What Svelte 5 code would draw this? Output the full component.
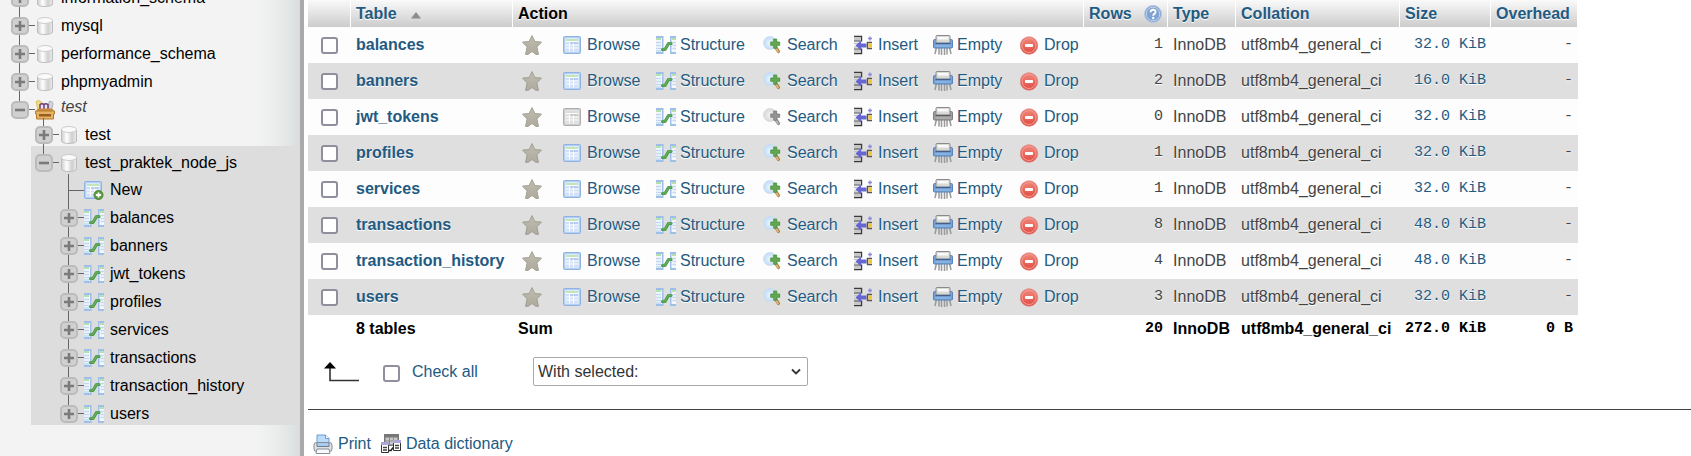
<script>
  const databases = ['information_schema', 'mysql', 'performance_schema', 'phpmyadmin'];
  let rows = $state([
    { name: 'balances', count: 1, size: '32.0 KiB', checked: false },
    { name: 'banners', count: 2, size: '16.0 KiB', checked: false },
    { name: 'jwt_tokens', count: 0, size: '32.0 KiB', checked: false },
    { name: 'profiles', count: 1, size: '32.0 KiB', checked: false },
    { name: 'services', count: 1, size: '32.0 KiB', checked: false },
    { name: 'transactions', count: 8, size: '48.0 KiB', checked: false },
    { name: 'transaction_history', count: 4, size: '48.0 KiB', checked: false },
    { name: 'users', count: 3, size: '32.0 KiB', checked: false }
  ]);
  const actions = ['Browse', 'Structure', 'Search', 'Insert', 'Empty', 'Drop'];
  const needsRows = ['Browse', 'Search', 'Empty'];
  let allChecked = $derived(rows.every((r) => r.checked));

  function toggleAll(event) {
    for (const r of rows) r.checked = event.currentTarget.checked;
  }
</script>

{#snippet icon(name, grey = false)}
  <svg class="icon" class:grey width="20" height="20" viewBox="0 0 20 20" aria-hidden="true">
    {#if name === 'Browse' || name === 'New'}
      <rect x="0.5" y="1.5" width="17" height="17" rx="1" fill="#b4d0f4" stroke="#8fb2e2" />
      <rect x="2.500" y="3.500" width="13" height="13" fill="#fff" />
      <path d="M3 5h12" stroke="#9ad48b" stroke-width="1.200" />
      <rect x="3" y="7" width="12" height="9" fill="#cfe0f6" />
      <path d="M3 10h12M3 13h12M6.500 7v9M10.500 7v9" stroke="#fff" />
      <path d="M7 8h8" stroke="#9dbbe6" />
      {#if name === 'New'}
        <circle cx="14.5" cy="15" r="4.5" fill="#5f9c40" stroke="#4a8430" />
        <path d="M14.5 12.4v5.2M11.9 15h5.2" stroke="#fff" stroke-width="1.8" />
      {/if}
    {:else if name === 'Structure'}
      <path d="M0 1h7.500v18H0z" fill="#9dbfe9" />
      <path d="M0 3h6v14H0z" fill="#f4f8fe" />
      <path d="M0 4h5" stroke="#9ad48b" stroke-width="1.400" />
      <path d="M0 7.5h5M0 10.5h5M0 13.5h5M0 16h5" stroke="#c4d7f0" stroke-width="1.6" />
      <path d="M14 1h6v18h-6z" fill="#9dbfe9" />
      <path d="M15.500 3H20v14h-4.500z" fill="#f4f8fe" />
      <path d="M16 4h4" stroke="#9ad48b" stroke-width="1.400" />
      <path d="M16.5 7.5H20M16.5 10.5H20M16.5 13.5H20" stroke="#c4d7f0" stroke-width="1.6" />
      <path d="M6.500 14.500h2.500l3.500-6h2.500" fill="none" stroke="#4a984a" stroke-width="3.2" stroke-linecap="round" stroke-linejoin="round" />
      <path d="M6.500 14.300h2.500l3.500-6h2.500" fill="none" stroke="#62ac5c" stroke-width="1.600" stroke-linecap="round" stroke-linejoin="round" />
    {:else if name === 'Search'}
      <path d="M12.500 12l3 4.500" stroke="#b88448" stroke-width="3.200" stroke-linecap="round" />
      <path d="M12.500 12l2.500 4.500" stroke="#eac18a" stroke-width="1.400" stroke-linecap="round" />
      <circle cx="7" cy="8" r="6.5" fill="url(#lens)" stroke="#c5daf0" stroke-width=".8" />
      <path d="M10.700 4h3v3h3v3.300h-3v3h-3v-3h-3V7h3z" fill="#62a851" stroke="#468f3b" stroke-width=".8" />
    {:else if name === 'Insert'}
      <path d="M0 1.500h7.500v5M0 18.500h7.500v-5" fill="none" stroke="#3a3a3a" stroke-width="1.400" />
      <path d="M0 2h6.500v3.500H0zM0 14.500h6.500v3.500H0z" fill="#c8c8c8" />
      <path d="M0 6h6.500M0 14h6.500" stroke="#444" stroke-width="1.200" />
      <path d="M0 8.500h4M0 12h3" stroke="#c4c4c4" stroke-width="1.600" />
      <path d="M1.500 10.500L7 5.500v3h5.500v4H7v3z" fill="#6666d2" />
      <path d="M18 7.500h-4.500v6H18" fill="none" stroke="#555" stroke-width="1.400" />
      <rect x="14.500" y="8.500" width="3.500" height="4" fill="#f8c62c" />
      <path d="M16 1.500v4M14 3.500h4" stroke="#8a8ae0" stroke-width="1.400" />
    {:else if name === 'Empty'}
      <path d="M3.500 12l-1.500 7M6 12v7.500M8.500 12v8M11.500 12v8M14 12v7.500M16.500 12l1.500 7" stroke="#999" stroke-width="1.500" fill="none" />
      <rect x="0.500" y="4.500" width="19" height="8.500" rx="1" fill="#74a3d8" stroke="#5684bd" />
      <rect x="3" y="0.500" width="14" height="7.500" rx="1" fill="#d9d9d9" stroke="#8a8a8a" />
      <rect x="4.500" y="2" width="11" height="2.500" fill="#fafafa" />
      <path d="M2.500 8.500h15" stroke="#40618d" stroke-width="1.200" />
      <path d="M2.500 11h15" stroke="#9dc0e8" />
    {:else if name === 'Drop'}
      <circle cx="9" cy="10.500" r="8.700" fill="url(#red)" stroke="#e08078" stroke-width=".8" />
      <circle cx="9" cy="10.500" r="7" fill="none" stroke="#f39b92" stroke-width="1" />
      <rect x="5" y="9" width="8" height="3" rx=".8" fill="#fff" />
    {:else if name === 'Star'}
      <path d="M10 .6l2.900 6 6.600.5-4.600 4.800 1.600 7.400-2.400.2L10 16.500 5.900 19.500l-2.400-.2 1.600-7.400L.5 7.100l6.600-.5z" fill="url(#star)" stroke="#a3a093" stroke-linejoin="round" />
    {:else if name === 'Database'}
      <path d="M2.500 4.500v11.500c0 3.300 15 3.300 15 0V4.500z" fill="url(#metal)" stroke="#bdbdbd" />
      <ellipse cx="10" cy="4.500" rx="7.500" ry="3" fill="#fafafa" stroke="#cdcdcd" />
    {:else if name === 'Group'}
      <path d="M1 1.500l3-1 3 2-.5 7.500H3z" fill="#f3dd80" stroke="#d3b650" stroke-width=".8" />
      <path d="M14 1.500q4-1 4 3l-2 7h-3z" fill="#d2d4d8" stroke="#aaa" stroke-width=".8" />
      <path d="M5 10V4.500q2-1.500 3.800 0 2-1.500 4.200 0V10" fill="#ece4f0" stroke="#6b3a7e" stroke-width="1.500" />
      <path d="M9 5v5" stroke="#6b3a7e" stroke-width="1.500" />
      <path d="M3 8.500h14l2.500 3H.5z" fill="#c98c3d" />
      <path d="M0.500 11h19v3h-1v5h-17v-5h-1z" fill="#e6b266" stroke="#b57a2e" />
      <rect x="4" y="14" width="12" height="2.500" fill="#965f20" />
    {:else if name === 'Help'}
      <circle cx="10" cy="10" r="8.500" fill="#7fa3d2" stroke="#b7c9e2" />
      <circle cx="10" cy="10" r="6.800" fill="none" stroke="#c5d6ec" />
      <path d="M7.600 8.300c0-3.300 5-3.200 5-.4 0 1.800-2.400 1.900-2.400 3.800" fill="none" stroke="#fff" stroke-width="1.900" />
      <circle cx="10.200" cy="14" r="1.200" fill="#fff" />
    {:else if name === 'Print'}
      <path d="M4 10V1h8.500L16 4.500V10z" fill="#bcdcfb" stroke="#6d9cd0" />
      <path d="M12.500 1v3.500H16" fill="#fff" stroke="#6d9cd0" />
      <rect x="1" y="8.500" width="18" height="9" rx="2.500" fill="#dfe2e6" stroke="#868d97" />
      <path d="M4 9v3.500h12V9" fill="#a9cdf2" stroke="#757b84" />
      <path d="M4 15h12l1 4.500H3z" fill="#f8fafc" stroke="#89909a" />
    {:else if name === 'Dictionary'}
      <path d="M3 0h15v12H3z" fill="#777" />
      <path d="M4.500 3.500h12v7h-12z" fill="#c9c9c9" />
      <path d="M4.500 7h12M8.500 3.500v7M12.500 3.500v7" stroke="#8a8a8a" />
      <path d="M0.500 9.500h7v9h-7zM12.500 7.500h7v9h-7z" fill="#fff" stroke="#333" />
      <path d="M0 8h8v3H0zM12 6h8v3h-8z" fill="#aaa6d9" />
      <path d="M2 13.500h4M2 16h4M14 11.500h4M14 14h4" stroke="#444" stroke-width="1.300" />
      <path d="M8 16.500h2l2-3" fill="none" stroke="#222" stroke-width="1.500" />
    {/if}
  </svg>
{/snippet}

{#snippet toggle(open, label)}
  <button class="toggle" type="button" aria-label={(open ? 'Collapse ' : 'Expand ') + label}>
    <svg width="10" height="10" viewBox="0 0 10 10" aria-hidden="true">
      <path d={open ? 'M0 5h10' : 'M0 5h10M5 0v10'} stroke="#7a7a7a" stroke-width="2.600" />
    </svg>
  </button>
{/snippet}

<svg class="defs" width="0" height="0" aria-hidden="true">
  <defs>
    <linearGradient id="metal"><stop offset="0" stop-color="#cdcdcd" /><stop offset=".35" stop-color="#fff" /><stop offset=".7" stop-color="#cfcfcf" /><stop offset="1" stop-color="#ececec" /></linearGradient>
    <linearGradient id="star" x2="0" y2="1"><stop offset="0" stop-color="#bfbcb0" /><stop offset="1" stop-color="#aeab9d" /></linearGradient>
    <linearGradient id="red" x2="0" y2="1"><stop offset="0" stop-color="#f08a7e" /><stop offset="1" stop-color="#e04a40" /></linearGradient>
    <radialGradient id="lens"><stop offset="0" stop-color="#eaf4ff" /><stop offset="1" stop-color="#c3dcf5" /></radialGradient>
  </defs>
</svg>

<div class="page">
  <nav class="sidebar">
    <ul class="tree">
      {#each databases as db}
        <li class="node">
          <span class="branch">{@render toggle(false, db)}</span>
          {@render icon('Database')}
          <a href="#{db}">{db}</a>
        </li>
      {/each}
      <li>
        <div class="node group last">
          <span class="branch">{@render toggle(true, 'group test')}</span>
          {@render icon('Group')}
          <a href="#group">test</a>
        </div>
        <ul class="level1">
          <li class="node">
            <span class="branch">{@render toggle(false, 'test')}</span>
            {@render icon('Database')}
            <a href="#test">test</a>
          </li>
          <li class="selected">
            <div class="node last">
              <span class="branch">{@render toggle(true, 'test_praktek_node_js')}</span>
              {@render icon('Database')}
              <a href="#test_praktek_node_js">test_praktek_node_js</a>
            </div>
            <ul class="level2">
              <li class="node new">
                <span class="branch"></span>
                {@render icon('New')}
                <a href="#new">New</a>
              </li>
              {#each rows as row, i}
                <li class="node" class:last={i === rows.length - 1}>
                  <span class="branch">{@render toggle(false, row.name)}</span>
                  {@render icon('Structure')}
                  <a href="#{row.name}">{row.name}</a>
                </li>
              {/each}
            </ul>
          </li>
        </ul>
      </li>
    </ul>
  </nav>

  <main>
    <table>
      <colgroup>
        <col class="c-check" /><col class="c-name" /><col class="c-star" />
        <col class="c-browse" /><col class="c-structure" /><col class="c-search" />
        <col class="c-insert" /><col class="c-empty" /><col class="c-drop" />
        <col class="c-rows" /><col class="c-type" /><col class="c-collation" />
        <col class="c-size" /><col class="c-overhead" />
      </colgroup>
      <thead>
        <tr>
          <th></th>
          <th>
            <a class="sort" href="#table">Table
              <svg width="10" height="8" viewBox="0 0 10 8" aria-hidden="true"><path d="M5 0l5 6.500H0z" fill="#8c8c8c" /></svg>
            </a>
          </th>
          <th class="black" colspan="7">Action</th>
          <th><a class="help" href="#rows">Rows {@render icon('Help')}</a></th>
          <th><a href="#type">Type</a></th>
          <th><a href="#collation">Collation</a></th>
          <th><a href="#size">Size</a></th>
          <th><a href="#overhead">Overhead</a></th>
        </tr>
      </thead>
      <tbody>
        {#each rows as row}
          <tr>
            <td class="check"><input type="checkbox" aria-label={row.name} bind:checked={row.checked} /></td>
            <th scope="row"><a href="#{row.name}">{row.name}</a></th>
            <td class="star"><a class="action" href="#favorite" aria-label="Favorite">{@render icon('Star')}</a></td>
            {#each actions as action}
              <td><a class="action" href="#{action}">{@render icon(action, row.count === 0 && needsRows.includes(action))}{action}</a></td>
            {/each}
            <td class="num">{row.count}</td>
            <td>InnoDB</td>
            <td>utf8mb4_general_ci</td>
            <td class="num"><a href="#size">{row.size}</a></td>
            <td class="num">-</td>
          </tr>
        {/each}
      </tbody>
      <tfoot>
        <tr>
          <th></th>
          <th>8 tables</th>
          <th colspan="7">Sum</th>
          <th class="num">20</th>
          <th>InnoDB</th>
          <th>utf8mb4_general_ci</th>
          <th class="num">272.0 KiB</th>
          <th class="num">0 B</th>
        </tr>
      </tfoot>
    </table>

    <div class="bulk">
      <svg class="arrow" width="36" height="20" viewBox="0 0 36 20" aria-hidden="true">
        <path d="M6 5v13.500h29" fill="none" stroke="#333" stroke-width="1.600" />
        <path d="M6 0l6 6.500H0z" fill="#000" />
      </svg>
      <label class="all"><input type="checkbox" checked={allChecked} onchange={toggleAll} />Check all</label>
      <div class="select">
        <select aria-label="With selected">
          <option>With selected:</option>
        </select>
        <svg width="10" height="8" viewBox="0 0 10 8" aria-hidden="true"><path d="M1 1.500l4 4 4-4" fill="none" stroke="#333" stroke-width="1.800" /></svg>
      </div>
    </div>

    <hr />

    <div class="tools">
      <a href="#print">{@render icon('Print')}Print</a>
      <a href="#dictionary">{@render icon('Dictionary')}Data dictionary</a>
    </div>
  </main>
</div>

<style>
  :global(body) {
    overflow: hidden;
    background: #fff;
  }
  .defs {
    position: absolute;
  }
  .page {
    display: flex;
    height: 100vh;
    overflow: hidden;
    font: 16px/20px 'Liberation Sans', Arial, sans-serif;
    color: #444;
  }
  a {
    color: #235a81;
    text-decoration: none;
  }
  .icon {
    display: block;
    flex: none;
  }
  .grey {
    filter: grayscale(1);
  }

  .sidebar {
    box-sizing: border-box;
    flex: 0 0 304px;
    overflow: hidden;
    border-right: 4px solid #aaa;
    background: linear-gradient(to right, #f3f3f3 256px, #e9ebeb 280px, #d9dddd);
  }
  ul {
    margin: 0;
    padding: 0;
    list-style: none;
  }
  /* The panel is scrolled part of the way through its first entry. */
  .tree {
    margin-top: -19px;
  }
  .node {
    display: flex;
    height: 28px;
    padding-left: 11px;
  }
  .node > :global(.icon) {
    margin-top: 7px;
  }
  .node a {
    margin: 7px 0 0 6px;
    color: #000;
  }
  .level1 .node {
    padding-left: 35px;
  }
  .level2 .node {
    padding-left: 60px;
  }
  .branch {
    box-sizing: border-box;
    width: 24px;
    padding-top: 8px;
    background:
      linear-gradient(#666, #666) 8px 0 / 1px 100% no-repeat,
      linear-gradient(#666, #666) 8px 16px / 16px 1px no-repeat;
  }
  .last .branch {
    background-size: 1px 16px, 16px 1px;
  }
  .node.group {
    height: 25px;
  }
  .group a {
    margin-top: 4px;
    color: #444;
    font-style: italic;
  }
  .node.new {
    height: 27px;
  }
  .new :global(.icon),
  .new a {
    margin-top: 6px;
  }
  .selected {
    background: linear-gradient(#ddd, #ddd) 31px 0 no-repeat;
  }
  .toggle {
    display: grid;
    place-items: center;
    box-sizing: border-box;
    width: 18px;
    height: 18px;
    padding: 0;
    border: 2px solid #bbb;
    border-radius: 5px;
    background: #d0d0d0;
  }

  main {
    flex: 1;
    min-width: 0;
    padding-left: 4px;
  }
  table {
    width: 1270px;
    table-layout: fixed;
    border-collapse: collapse;
    white-space: nowrap;
    text-shadow: 0 1px 0 #fff;
  }
  .c-check { width: 43px; }
  .c-name { width: 162px; }
  .c-star { width: 45px; }
  .c-browse { width: 93px; }
  .c-structure { width: 107px; }
  .c-search { width: 91px; }
  .c-insert { width: 79px; }
  .c-empty { width: 87px; }
  .c-drop { width: 69px; }
  .c-rows { width: 84px; }
  .c-type { width: 68px; }
  .c-collation { width: 164px; }
  .c-size { width: 91px; }
  .c-overhead { width: 87px; }
  th,
  td {
    padding: 0 5px;
    text-align: left;
  }
  thead th {
    height: 27px;
    background:
      linear-gradient(#fff, #fff) right / 1px 100% no-repeat,
      linear-gradient(#fafafa, #ccc);
  }
  .black,
  tfoot {
    color: #000;
  }
  .sort {
    display: flex;
    align-items: center;
    gap: 14px;
  }
  .sort svg {
    margin-top: 4px;
  }
  .help {
    display: flex;
    justify-content: space-between;
    align-items: center;
  }
  tbody tr {
    height: 36px;
    background: #fdfdfd;
  }
  tbody tr:nth-child(even) {
    background: #dfdfdf;
  }
  input {
    appearance: none;
    box-sizing: border-box;
    width: 17px;
    height: 17px;
    margin: 0;
    border: 2px solid #8f8f9d;
    border-radius: 3px;
    background: #fff;
  }
  input:checked {
    background: #235a81;
  }
  .check {
    padding-left: 13px;
  }
  .check input {
    display: block;
  }
  .star {
    padding-left: 9px;
  }
  .action {
    display: flex;
    align-items: center;
    gap: 4px;
  }
  .num {
    font-family: 'Liberation Mono', monospace;
    font-size: 15px;
    text-align: right;
  }
  tfoot tr {
    height: 28px;
  }

  .bulk {
    display: flex;
    align-items: center;
    margin-top: 14px;
    padding-left: 16px;
  }
  .arrow {
    margin-right: 21px;
  }
  .all {
    display: flex;
    align-items: center;
    gap: 12px;
    width: 143px;
    padding-left: 2px;
    color: #235a81;
  }
  .all input {
    margin-top: 4px;
  }
  .select {
    display: grid;
    align-items: center;
    width: 275px;
    margin-left: 7px;
  }
  .select > * {
    grid-area: 1 / 1;
  }
  .select svg {
    justify-self: end;
    margin-right: 7px;
    pointer-events: none;
  }
  select {
    appearance: none;
    box-sizing: border-box;
    width: 100%;
    height: 29px;
    padding: 0 4px;
    border: 1px solid #aaa;
    border-radius: 2px;
    background: #fff;
    color: #333;
    font: inherit;
  }
  hr {
    height: 1px;
    margin: 23px 0 24px;
    border: 0;
    background: #444;
  }
  .tools {
    display: flex;
    gap: 10px;
    padding-left: 5px;
  }
  .tools a {
    display: flex;
    align-items: center;
    gap: 5px;
  }
</style>
